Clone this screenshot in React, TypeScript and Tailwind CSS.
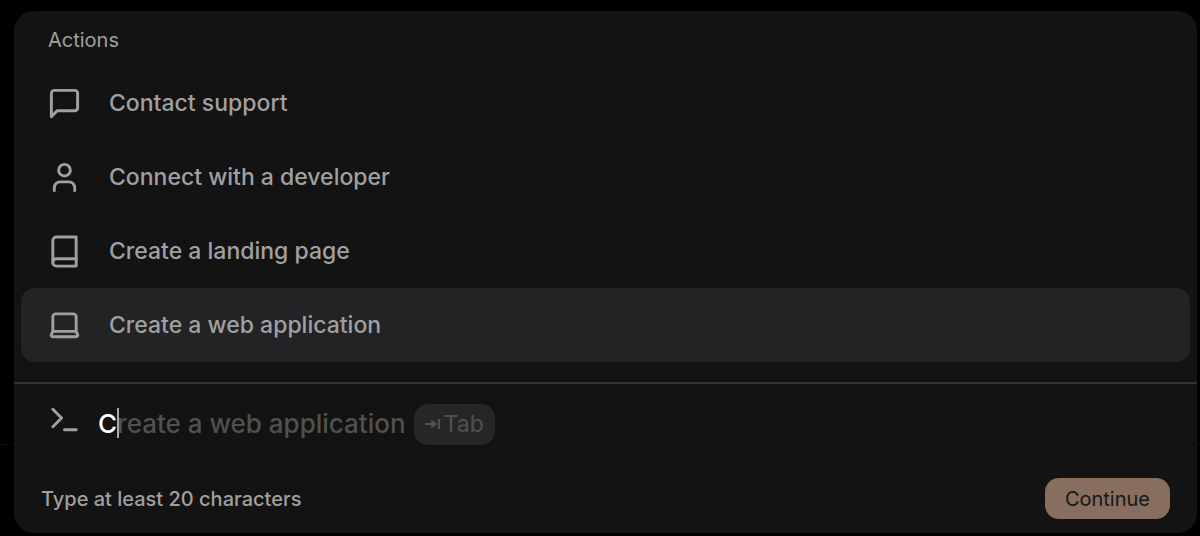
import { useState } from "react";
import type { ReactNode } from "react";

type IconProps = { className?: string };

function LineIcon({ className, children }: IconProps & { children: ReactNode }) {
  return (
    <svg
      viewBox="0 0 24 24"
      fill="none"
      stroke="currentColor"
      strokeWidth={2}
      strokeLinecap="round"
      strokeLinejoin="round"
      className={className}
      aria-hidden="true"
    >
      {children}
    </svg>
  );
}

function MessageIcon({ className }: IconProps) {
  return (
    <LineIcon className={className}>
      <path d="M21 15a2 2 0 0 1-2 2H7l-4 4V5a2 2 0 0 1 2-2h14a2 2 0 0 1 2 2z" />
    </LineIcon>
  );
}

function UserIcon({ className }: IconProps) {
  return (
    <LineIcon className={className}>
      <path d="M19 21v-2a4 4 0 0 0-4-4H9a4 4 0 0 0-4 4v2" />
      <circle cx="12" cy="7" r="4" />
    </LineIcon>
  );
}

function BookIcon({ className }: IconProps) {
  return (
    <LineIcon className={className}>
      <path d="M4 19.5A2.5 2.5 0 0 1 6.5 17H20" />
      <path d="M6.5 2H20v20H6.5A2.5 2.5 0 0 1 4 19.5v-15A2.5 2.5 0 0 1 6.5 2z" />
    </LineIcon>
  );
}

function LaptopIcon({ className }: IconProps) {
  return (
    <LineIcon className={className}>
      <path d="M20 16V6a2 2 0 0 0-2-2H6a2 2 0 0 0-2 2v10m16 0H4m16 0 1 2.3a1 1 0 0 1-.9 1.4H3.9a1 1 0 0 1-.9-1.4L4 16" />
    </LineIcon>
  );
}

function PromptIcon({ className }: IconProps) {
  return (
    <LineIcon className={className}>
      <path d="m4 17 6-6-6-6" />
      <path d="M12 19h8" />
    </LineIcon>
  );
}

const actions = [
  { label: "Contact support", Icon: MessageIcon },
  { label: "Connect with a developer", Icon: UserIcon },
  { label: "Create a landing page", Icon: BookIcon },
  { label: "Create a web application", Icon: LaptopIcon },
];

export default function App() {
  const [value, setValue] = useState("C");
  const [selected, setSelected] = useState(3);
  const suggestion = actions[selected].label;
  const rest = suggestion.startsWith(value) ? suggestion.slice(value.length) : "";

  return (
    <main className="relative min-h-screen bg-black pt-[11px] pr-[3px] pb-[3px] pl-[14px] font-['Inter',sans-serif] text-[#a0a0a1]">
      <div className="absolute inset-x-0 top-[444px] border-t border-dotted border-[#161616]" />
      <section className="relative rounded-[20px] bg-[#131313]">
        <div className="px-[7px] pb-5">
          <h2 className="px-[27px] pt-[14px] pb-[11px] text-[20px] leading-[30px]">Actions</h2>
          <ul>
            {actions.map(({ label, Icon }, i) => (
              <li key={label}>
                <button
                  type="button"
                  onClick={() => setSelected(i)}
                  className={`flex h-[74px] w-full items-center gap-[27px] rounded-[14px] px-[26px] text-left text-[23px] font-medium ${
                    i === selected ? "bg-[#232325]" : ""
                  }`}
                >
                  <Icon className="size-[35px] shrink-0" />
                  {label}
                </button>
              </li>
            ))}
          </ul>
        </div>

        <div className="flex items-start gap-4 border-t-2 border-[#323232] pt-[18px] pr-6 pl-[33px]">
          <PromptIcon className="size-[35px] shrink-0" />
          <div className="relative h-[44px] grow text-[26px] leading-[44px] font-medium">
            <div aria-hidden="true" className="flex items-center whitespace-pre text-[#505050]">
              <span className="invisible">{value}</span>
              <span className="relative">
                <span className="absolute top-[6px] left-0 h-[30px] w-[2px] bg-[#a8a8a8]" />
                {rest}
              </span>
              <kbd className="ml-2 flex h-[41px] items-center gap-[3px] rounded-[14px] bg-[#262628] px-[11px] font-['Inter',sans-serif] text-[23px] font-normal text-[#505052]">
                <svg viewBox="0 0 16 12" className="h-3 w-4" fill="none" stroke="currentColor" strokeWidth="2">
                  <path d="M0 6h8" />
                  <path d="M6 1.5l6.5 4.5L6 10.5z" fill="currentColor" stroke="none" />
                  <path d="M14 1v10" />
                </svg>
                Tab
              </kbd>
            </div>
            <input
              type="text"
              aria-label="Command"
              value={value}
              onChange={(e) => setValue(e.target.value)}
              className="absolute inset-0 w-full bg-transparent text-white caret-transparent outline-none"
            />
          </div>
        </div>

        <div className="flex items-center justify-between pt-8 pr-[27px] pb-[14px] pl-[27px]">
          <p className="text-[20px] font-medium">Type at least 20 characters</p>
          <button
            type="button"
            className="h-[41px] rounded-[14px] bg-[#886e5e] px-5 text-[20px] text-[#15181c]"
          >
            Continue
          </button>
        </div>
      </section>
    </main>
  );
}
